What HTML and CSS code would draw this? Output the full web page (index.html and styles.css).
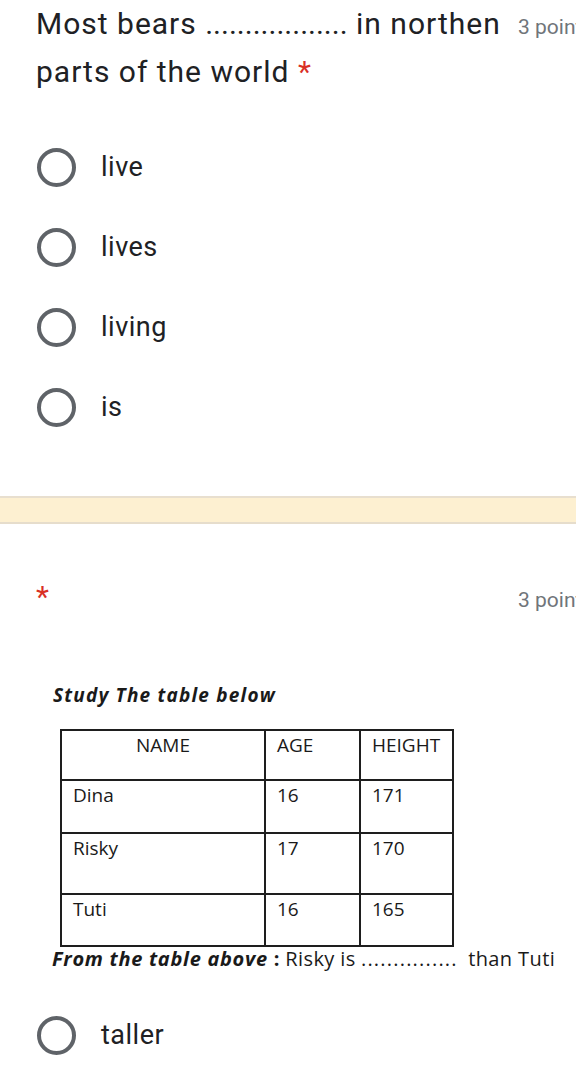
FILE: index.html
```html
<!DOCTYPE html>
<html>
<head>
<meta charset="utf-8">
<link rel="stylesheet" href="styles.css">
</head>
<body>
<div class="page">
  <section class="question q1">
    <div class="q-head">
      <div class="q-title">Most bears <span class="dots">..................</span> in northen parts of the world <span class="req">*</span></div>
      <div class="q-points">3 points</div>
    </div>
    <div class="options">
      <label class="option"><span class="radio"></span><span class="opt-text">live</span></label>
      <label class="option"><span class="radio"></span><span class="opt-text">lives</span></label>
      <label class="option"><span class="radio"></span><span class="opt-text">living</span></label>
      <label class="option"><span class="radio"></span><span class="opt-text">is</span></label>
    </div>
  </section>

  <div class="divider"></div>

  <section class="question q2">
    <div class="q-head">
      <div class="q-title"><span class="req">*</span></div>
      <div class="q-points">3 points</div>
    </div>
    <div class="q-image">
      <div class="img-heading">Study The table below</div>
      <table class="data">
        <tr class="r0"><td class="center">NAME</td><td>AGE</td><td>HEIGHT</td></tr>
        <tr class="r1"><td>Dina</td><td>16</td><td>171</td></tr>
        <tr class="r2"><td>Risky</td><td>17</td><td>170</td></tr>
        <tr class="r3"><td>Tuti</td><td>16</td><td>165</td></tr>
      </table>
      <div class="img-caption"><b><i>From the table above</i> :</b> <span class="cap-text">Risky is</span> <span class="cap-dots">...............</span>&nbsp; <span class="cap-text">than Tuti</span></div>
    </div>
    <div class="options">
      <label class="option"><span class="radio"></span><span class="opt-text">taller</span></label>
    </div>
  </section>
</div>
</body>
</html>
```
FILE: styles.css
```css
html, body {
  margin: 0;
  padding: 0;
  background: #ffffff;
}
body {
  font-family: Roboto, "Noto Sans", sans-serif;
  color: #202124;
  overflow: hidden;
}
.page {
  width: 576px;
  overflow: hidden;
}
.question {
  padding-left: 36px;
}
.q-head {
  display: grid;
  grid-template-columns: 482px auto;
  align-items: baseline;
}
.q-title {
  font-size: 30px;
  line-height: 48px;
  letter-spacing: 1px;
  color: #202124;
}
.dots {
  letter-spacing: 0;
}
.req {
  color: #d93025;
}
.q-points {
  font-size: 21px;
  color: #70757a;
  white-space: nowrap;
}
.options {
  display: flex;
  flex-direction: column;
}
.q1 .options {
  margin-top: 31px;
}
.option {
  display: flex;
  align-items: center;
  height: 80px;
  gap: 25px;
}
.radio {
  box-sizing: border-box;
  width: 39px;
  height: 39px;
  border: 4px solid #5f6368;
  border-radius: 50%;
  margin-left: 1px;
  flex: none;
}
.opt-text {
  font-size: 27px;
  letter-spacing: 0.5px;
  color: #202124;
}
.divider {
  margin-top: 49px;
  height: 24px;
  background: #fdf0d1;
  border-top: 2px solid #e8dfcf;
  border-bottom: 2px solid #e6ddcc;
}
.q2 {
  margin-top: 49px;
}
.q-image {
  margin-top: 62px;
  padding-left: 17px;
  font-family: "Open Sans", Lato, sans-serif;
  color: #1a1a1a;
}
.img-heading {
  font-size: 19px;
  font-weight: bold;
  font-style: italic;
  line-height: 24px;
  letter-spacing: 1.2px;
}
.data {
  margin-top: 22px;
  margin-left: 7px;
  border-collapse: collapse;
  font-size: 19px;
  line-height: 24px;
}
.data td {
  border: 2px solid #1e1e1e;
  vertical-align: top;
  padding: 2px 0 0 11px;
  box-sizing: border-box;
}
.data td:nth-child(1) { width: 204px; }
.data td:nth-child(2) { width: 95px; }
.data td:nth-child(3) { width: 93px; }
.data td.center { text-align: center; padding-left: 0; }
.r0 td { height: 50px; }
.r1 td { height: 53px; }
.r2 td { height: 61px; }
.r3 td { height: 52px; }
.img-caption {
  margin-left: -1px;
  font-size: 20px;
  line-height: 24px;
  white-space: nowrap;
}
.img-caption b {
  letter-spacing: 0.7px;
}
.cap-text {
  letter-spacing: 0.4px;
}
.cap-dots {
  letter-spacing: 1.2px;
}
.q2 .options {
  margin-top: 24px;
}
```
